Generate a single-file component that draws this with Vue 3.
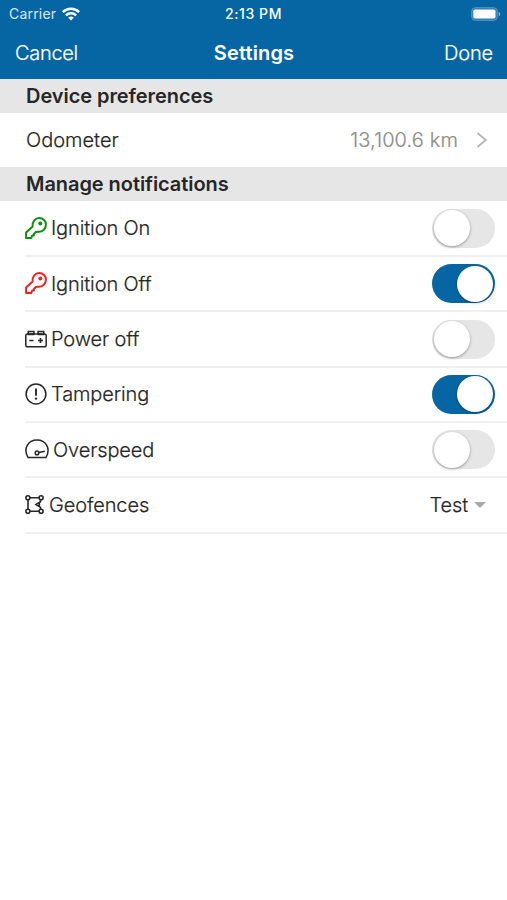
<script setup>
import { ref } from 'vue'

const rows = ref([
  { id: 'on', label: 'Ignition On', icon: 'key', on: false },
  { id: 'off', label: 'Ignition Off', icon: 'key', on: true },
  { id: 'power', label: 'Power off', icon: 'battery', on: false },
  { id: 'tamper', label: 'Tampering', icon: 'alert', on: true },
  { id: 'speed', label: 'Overspeed', icon: 'gauge', on: false },
])
</script>

<template>
  <main class="screen">
    <header class="header">
      <div class="status">
        <div class="carrier">
          <span>Carrier</span>
          <svg class="wifi" viewBox="0 0 18 14" width="18" height="14">
            <g fill="none" stroke="#fff" stroke-width="2.5">
              <path d="M.9 5.2C5.3.7 12.700.7 17.100 5.200" />
              <path d="M3.900 8.300c2.900-2.800 7.300-2.800 10.200 0" />
            </g>
            <path d="M6.200 10.700c1.600-1.500 4-1.500 5.600 0L9 13.500z" fill="#fff" />
          </svg>
        </div>
        <span class="time">2:13 PM</span>
        <svg class="cell" viewBox="0 0 30 14" width="30" height="14">
          <rect x=".7" y=".7" width="25.600" height="12.600" rx="3.600" fill="#2c7cb1" stroke="#5b9bc5" stroke-width="1" />
          <rect x="2.300" y="2.500" width="22.200" height="9" rx="1.800" fill="#fff" />
          <path d="M27.700 4.700c2 .8 2 3.800 0 4.600z" fill="#7fb2d3" />
        </svg>
      </div>
      <nav class="nav">
        <span class="cancel">Cancel</span>
        <h1 class="title">Settings</h1>
        <span class="done">Done</span>
      </nav>
    </header>

    <h2 class="section device">Device preferences</h2>
    <div class="row odometer">
      <span class="label">Odometer</span>
      <span class="value">13,100.6 km</span>
      <svg class="chevron" viewBox="0 0 12 18" width="12" height="18">
        <path d="M1.500 2 9.800 9l-8.300 7" fill="none" stroke="#b9b9b9" stroke-width="2" />
      </svg>
    </div>

    <h2 class="section manage">Manage notifications</h2>
    <div v-for="row in rows" :key="row.id" class="row item" :class="row.id">
      <svg v-if="row.icon === 'key'" class="icon key" viewBox="0 0 22 22" width="22" height="22">
        <path d="M1.100 20.900v-5.300l6.500-6C7 4.800 9.900 1.100 14.300 1.100c3.800 0 6.600 2.800 6.600 6.500 0 4.500-3.400 7.500-7.900 7.100l-2.200.3-1.900 1.900v1.500H7.200l-.9 2.500z" fill="none" stroke="currentColor" stroke-width="2" stroke-linejoin="round" />
        <circle cx="15.300" cy="6.600" r="2" fill="currentColor" />
      </svg>
      <svg v-else-if="row.icon === 'battery'" class="icon" viewBox="0 0 22 18" width="22" height="18">
        <rect x=".8" y="4" width="20.400" height="12.800" rx="1.800" fill="none" stroke="currentColor" stroke-width="1.500" />
        <path d="M3.300 4V1.500h5.600V4M13.100 4V1.500h5.600V4" fill="none" stroke="currentColor" stroke-width="1.600" />
        <path d="M2.500 4.200h7M12.500 4.200h7" stroke="currentColor" stroke-width="2" />
        <path d="M4.300 10.500h4.200M13 10.500h5M15.500 8v5" fill="none" stroke="currentColor" stroke-width="1.600" />
      </svg>
      <svg v-else-if="row.icon === 'alert'" class="icon" viewBox="0 0 22 22" width="22" height="22">
        <circle cx="11" cy="11" r="9.900" fill="none" stroke="currentColor" stroke-width="1.500" />
        <path d="M11 5.400v7.400" stroke="currentColor" stroke-width="1.900" />
        <circle cx="11" cy="15.600" r="1.200" fill="currentColor" />
      </svg>
      <svg v-else class="icon" viewBox="0 0 24 20" width="24" height="20">
        <path d="M3.100 18.600C-2.300 9.300 3.300 1 12 1s14.300 8.300 8.900 17.600z" fill="none" stroke="currentColor" stroke-width="1.500" stroke-linejoin="round" />
        <circle cx="12" cy="13.900" r="1.800" fill="none" stroke="currentColor" stroke-width="1.500" />
        <path d="m13.800 13.500 6-1.300" stroke="currentColor" stroke-width="1.500" />
      </svg>
      <span class="label">{{ row.label }}</span>
      <button class="switch" :class="{ active: row.on }" role="switch" :aria-checked="row.on" @click="row.on = !row.on">
        <span class="knob"></span>
      </button>
    </div>

    <div class="row item fences">
      <svg class="icon" viewBox="0 0 19 19" width="19" height="19">
        <g fill="none" stroke="currentColor" stroke-width="1.600">
          <path d="M5 2.800h9M5 16.200h9M3 4.800v9.400M15.500 4.800v2L11 9.500l4.500 2.700v2M14.300 7.500v4" />
          <circle cx="2.900" cy="2.800" r="2" />
          <circle cx="16.100" cy="2.800" r="2" />
          <circle cx="2.900" cy="16.200" r="2" />
          <circle cx="16.100" cy="16.200" r="2" />
        </g>
      </svg>
      <span class="label">Geofences</span>
      <span class="choice">Test</span>
      <span class="caret"></span>
    </div>
  </main>
</template>

<style>
body {
  background: #fff;
}
</style>

<style scoped>
.screen {
  width: 507px;
  height: 900px;
  overflow: hidden;
  background: #fff;
  color: #262626;
  font: 300 20px/1.2 Inter, "Liberation Sans", sans-serif;
  letter-spacing: -0.12px;
  white-space: nowrap;
}
.label,
.value,
.choice,
.cancel,
.done {
  -webkit-text-stroke: 0.2px currentColor;
}
.header {
  height: 79px;
  background: #0666a4;
  color: #fff;
}
.status {
  display: grid;
  grid-template-columns: 1fr auto 1fr;
  align-items: center;
  box-sizing: border-box;
  height: 28px;
  padding: 1px 6px 0 9px;
  font-size: 14px;
}
.carrier {
  display: flex;
  align-items: center;
  gap: 6px;
  font-weight: 400;
  letter-spacing: 0.2px;
  color: #d8e8f2;
}
.time {
  margin-right: 3px;
  font-weight: 500;
  letter-spacing: 0.6px;
}
.cell {
  justify-self: end;
  margin-bottom: 1px;
}
.nav {
  display: grid;
  grid-template-columns: 1fr auto 1fr;
  align-items: center;
  height: 49px;
  padding: 0 14px 0 15px;
}
.cancel {
  letter-spacing: -0.3px;
}
.title {
  margin: 0;
  font-size: 20px;
  font-weight: 600;
  letter-spacing: 0.15px;
}
.done {
  justify-self: end;
}
.section {
  display: flex;
  align-items: center;
  height: 34px;
  margin: 0;
  padding-left: 26px;
  background: #e6e6e6;
  font-size: 20px;
  font-weight: 600;
  letter-spacing: -0.06px;
}
.manage {
  margin-bottom: 1.200px;
}
.row {
  display: flex;
  align-items: center;
  box-sizing: border-box;
  padding-right: 12px;
}
.odometer {
  height: 53.600px;
  padding-left: 26px;
}
.odometer .label {
  letter-spacing: 0;
}
.label {
  margin-right: auto;
}
.value {
  color: #8e8e8e;
  letter-spacing: 0.12px;
}
.chevron {
  margin: 0 7px 0 18px;
}
.item {
  height: 55.330px;
  margin-left: 25px;
  border-bottom: 2px solid #f0f0f0;
}
.icon {
  flex: none;
  margin: 0 4px 1px 0;
}
.fences .icon {
  margin-right: 5px;
}
.on .icon {
  color: #0b900b;
}
.off .icon {
  color: #f71f1f;
}
.switch {
  width: 63px;
  height: 39px;
  padding: 1.500px 2px;
  border: 0;
  border-radius: 20px;
  background: #e6e6e6;
}
.knob {
  display: block;
  width: 36px;
  height: 36px;
  border-radius: 50%;
  background: #fff;
  box-shadow: 0 1px 3px rgba(0, 0, 0, 0.35);
}
.active {
  background: #0666a4;
}
.active .knob {
  margin-left: auto;
}
.caret {
  margin: 0 9px 0 6px;
  border: 6px solid transparent;
  border-top-color: #a9a9a9;
  border-bottom: 0;
}
</style>
